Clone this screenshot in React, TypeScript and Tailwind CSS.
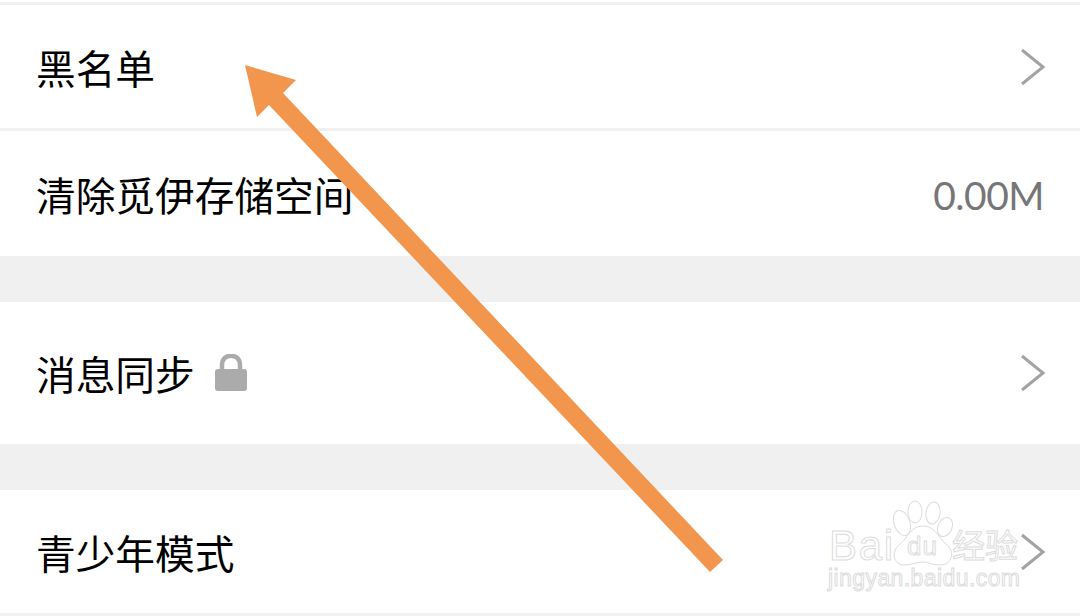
const cjk = "font-['Noto_Sans_CJK_SC','Noto_Sans',sans-serif]"

function Chevron() {
  return (
    <svg width="26" height="38" viewBox="0 0 26 38" fill="none" className="shrink-0">
      <path d="M2 2 L23 19 L2 36" stroke="#a3a3a3" strokeWidth="3" />
    </svg>
  )
}

function Lock() {
  return (
    <svg width="34" height="38" viewBox="0 0 34 38" className="shrink-0">
      <path d="M8 16 V11 C8 -1.5 26 -1.5 26 11 V16" fill="none" stroke="#ababab" strokeWidth="4.5" />
      <rect x="1" y="15" width="32" height="22" rx="3" fill="#ababab" />
    </svg>
  )
}

function Watermark() {
  const outline = { fill: "#ffffff", stroke: "#dcdcdc", strokeWidth: 1 }
  return (
    <svg width="200" height="100" viewBox="0 0 200 100" className="absolute left-[824px] top-[496px]">
      <ellipse cx="78" cy="27" rx="8" ry="13" {...outline} transform="rotate(-20 78 27)" />
      <ellipse cx="91" cy="16" rx="7" ry="11" {...outline} />
      <ellipse cx="109" cy="17" rx="7" ry="11" {...outline} transform="rotate(8 109 17)" />
      <ellipse cx="121" cy="31" rx="7" ry="10" {...outline} transform="rotate(25 121 31)" />
      <path d="M99 30 C112 30 114 42 122 48 C132 56 128 69 116 69 C108 69 104 66 99 66 C92 66 88 69 80 69 C70 69 66 56 76 48 C84 42 86 30 99 30 Z" {...outline} />
      <text x="5" y="64" fontFamily="Liberation Sans, sans-serif" fontSize="42" {...outline} textLength="64">Bai</text>
      <text x="83" y="59" fontFamily="Liberation Sans, sans-serif" fontSize="26" {...outline} textLength="30">du</text>
      <text x="128" y="62" fontFamily="Noto Sans CJK SC, sans-serif" fontSize="33" {...outline}>经验</text>
      <text x="4" y="90" fontFamily="Liberation Sans, sans-serif" fontSize="23" {...outline} textLength="192">jingyan.baidu.com</text>
    </svg>
  )
}

function Arrow() {
  return (
    <svg width="1080" height="616" viewBox="0 0 1080 616" className="absolute left-0 top-0">
      <path d="M245 65 L296 80 L283 93 L723 560 L710 572 L269 105 L257 117 Z" fill="#f3964d" />
    </svg>
  )
}

export default function App() {
  return (
    <div className={`relative w-[1080px] h-[616px] overflow-hidden bg-[#f0f0f0] text-[39.7px] leading-none text-black ${cjk}`}>
      <div className="h-[2px] bg-white" />
      <div className="pt-[3px] flex flex-col">
        <div className="h-[123px] bg-white flex items-center justify-between pl-[36px] pr-[34px]">
          <span>黑名单</span>
          <Chevron />
        </div>
        <div className="mt-[3px] h-[125px] bg-white flex items-center justify-between pl-[36px] pr-[36px]">
          <span>清除觅伊存储空间</span>
          <span className="pt-[4px] font-['Lato',sans-serif] text-[39px] tracking-[-0.5px] text-[#767676]">0.00M</span>
        </div>
        <div className="mt-[46px] h-[142px] bg-white flex items-center justify-between pl-[36px] pr-[34px]">
          <span className="flex items-center gap-[19px]">
            消息同步
            <Lock />
          </span>
          <Chevron />
        </div>
        <div className="mt-[46px] h-[123px] bg-white flex items-center justify-between pl-[36px] pr-[34px]">
          <span>青少年模式</span>
          <Chevron />
        </div>
      </div>
      <Watermark />
      <Arrow />
    </div>
  )
}
